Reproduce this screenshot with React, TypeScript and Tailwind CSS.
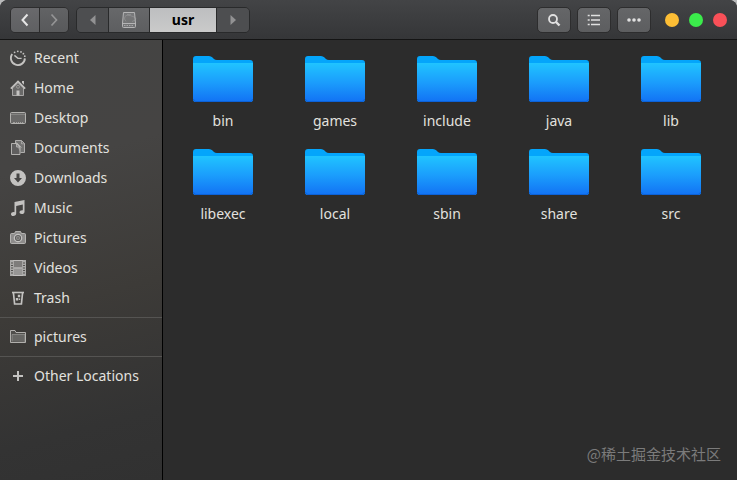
import type { ReactNode } from "react";

function Glyph({ children }: { children: ReactNode }) {
  return (
    <svg
      viewBox="0 0 16 16"
      className="size-4 shrink-0"
      fill="none"
      stroke="currentColor"
      strokeWidth="1"
      aria-hidden="true"
    >
      {children}
    </svg>
  );
}

const icons: Record<string, ReactNode> = {
  Recent: (
    <Glyph>
      <path d="M2.2 4A7 7 0 1 0 14.9 8.4" strokeWidth="1.9" />
      <path d="M4.4 5.4 8 8.400h3.600" strokeWidth="1.400" />
      <g fill="currentColor" stroke="none">
        <circle cx="4.600" cy="2.300" r=".9" />
        <circle cx="7.800" cy="1.300" r=".9" />
        <circle cx="11" cy="1.900" r=".9" />
        <circle cx="13.400" cy="3.700" r=".9" />
        <circle cx="14.800" cy="6.200" r=".9" />
      </g>
    </Glyph>
  ),
  Home: (
    <Glyph>
      <path d="M2.500 8v7.500h11V8L8 2.600z" fill="#ffffff" fillOpacity=".2" strokeOpacity=".75" />
      <path d="M.8 8.600 8 1.400l7.200 7.200" strokeWidth="1.500" />
      <path d="M12 1h2v3.800l-2-2z" fill="currentColor" stroke="none" />
      <circle cx="8" cy="6.800" r="1.500" strokeOpacity=".5" />
      <path d="M6.500 10.500h3v5h-3z" fill="currentColor" stroke="none" />
    </Glyph>
  ),
  Desktop: (
    <Glyph>
      <rect x=".5" y="2.500" width="15" height="11" rx="1" fill="#ffffff" fillOpacity=".2" strokeOpacity=".85" />
      <path d="M1 4.500h14" strokeOpacity=".3" />
      <path d="M3 12.500h2M6 12.500h1M8 12.500h1M10 12.500h1M12 12.500h1" strokeOpacity=".6" />
    </Glyph>
  ),
  Documents: (
    <Glyph>
      <path d="M5.500 3.500v-3h6l3 3v9h-4" fill="#ffffff" fillOpacity=".25" strokeOpacity=".8" />
      <path d="M11.500.8v3h3" strokeOpacity=".6" />
      <path d="M1.500 3.500h5l3.500 3.500v7.500H1.500z" fill="#ffffff" fillOpacity=".15" strokeOpacity=".85" />
      <path d="M6.500 3.500V7H10M6.500 2.500l5 5" strokeOpacity=".7" />
    </Glyph>
  ),
  Downloads: (
    <Glyph>
      <path
        d="M8 0a8 8 0 1 0 0 16A8 8 0 0 0 8 0ZM6.500 3.500h3V8H12l-4 4.500L4 8h2.500z"
        fill="currentColor"
        fillRule="evenodd"
        stroke="none"
      />
    </Glyph>
  ),
  Music: (
    <Glyph>
      <path
        d="M4.500 2 14.500 0v11.700c0 1.400-1.200 2.300-2.800 2.300-1.400 0-2.200-.7-2.200-1.700 0-1.300 1.500-2.300 3.300-2V4.600l-6.600 1.300v7.600c0 1.500-1.300 2.500-2.900 2.500C1.900 16 1 15.300 1 14.200c0-1.400 1.600-2.400 3.500-2z"
        fill="currentColor"
        stroke="none"
      />
    </Glyph>
  ),
  Pictures: (
    <Glyph>
      <path
        d="M1.500 3.500h3l1-2h5l1 2h3q1 0 1 1v8q0 1-1 1h-13q-1 0-1-1v-8q0-1 1-1Z"
        fill="#ffffff"
        fillOpacity=".4"
        strokeOpacity=".85"
      />
      <circle cx="8" cy="8" r="3.700" fill="#5a5958" strokeWidth="1.200" />
      <circle cx="8" cy="8" r="1.800" fill="#767573" strokeOpacity=".4" />
    </Glyph>
  ),
  Videos: (
    <Glyph>
      <rect x=".5" y=".5" width="15" height="15" fill="#ffffff" fillOpacity=".1" strokeOpacity=".8" />
      <rect x="3.500" y=".5" width="9" height="7" fill="#ffffff" fillOpacity=".25" strokeOpacity=".7" />
      <rect x="3.500" y="8.500" width="9" height="7" fill="#ffffff" fillOpacity=".4" strokeOpacity=".7" />
      <path d="M2 1v14M14 1v14" strokeWidth="2" strokeDasharray="1.500 1" strokeOpacity=".8" />
    </Glyph>
  ),
  Trash: (
    <Glyph>
      <path d="M2 2.500h12" strokeWidth="1.600" />
      <path d="M3.400 2.500 4.600 14h6.800l1.200-11.500" strokeWidth="1.700" />
      <path d="M7.800 4.800h2.400v2.400H7.800zM5.800 8h2.400v2.600H5.800zM8.800 8.500h1.400v1.400H8.800z" fill="currentColor" stroke="none" />
    </Glyph>
  ),
  pictures: (
    <Glyph>
      <path d="M.5 13.500v-12h4.500l1 2h9.500v10z" fill="#ffffff" fillOpacity=".1" strokeOpacity=".85" />
      <path d="M2 12.500v-7h13v7.500" fill="#ffffff" fillOpacity=".14" strokeOpacity=".4" />
    </Glyph>
  ),
  "Other Locations": (
    <Glyph>
      <path d="M8 3v10M3 8h10" strokeWidth="2" />
    </Glyph>
  ),
};

const placeGroups = [
  ["Recent", "Home", "Desktop", "Documents", "Downloads", "Music", "Pictures", "Videos", "Trash"],
  ["pictures"],
  ["Other Locations"],
];

const folders = [
  "bin", "games", "include", "java", "lib",
  "libexec", "local", "sbin", "share", "src",
];

function Places() {
  return (
    <nav
      aria-label="Places"
      className="w-[163px] shrink-0 border-r border-black bg-[linear-gradient(165deg,#444443_0%,#454443_28%,#3d3b38_58%,#333333_85%,#313131_100%)] text-[#e2e1df]"
    >
      {placeGroups.map((group, i) => (
        <ul
          key={group[0]}
          className={i === 0 ? "pt-[3px] pb-1" : "border-t border-[#555452] py-1"}
        >
          {group.map((name) => (
            <li key={name}>
              <a href="#" className="flex h-[30px] items-center gap-2 px-2.5 whitespace-nowrap">
                <span className="text-[#c3c2c0]">{icons[name]}</span>
                {name}
              </a>
            </li>
          ))}
        </ul>
      ))}
    </nav>
  );
}

function FolderIcon() {
  return (
    <svg viewBox="0 0 60 46" className="h-[46px] w-[60px]" aria-hidden="true">
      <path
        d="M0 3Q0 0 3 0H16Q18 0 19.500 1.500L21 3Q22 4 24 4H57Q60 4 60 7V43Q60 46 57 46H3Q0 46 0 43Z"
        fill="#04a5fb"
      />
      <path d="M0 7H60V43Q60 46 57 46H3Q0 46 0 43Z" fill="url(#folder-front)" />
      <path d="M.5 43Q.5 45.500 3 45.500H57Q59.500 45.500 59.500 43" fill="none" stroke="#0c62d8" />
    </svg>
  );
}

const tool =
  "flex h-[26px] w-[34px] items-center justify-center rounded-[5px] border border-[#2d2d2e] bg-linear-to-b from-[#656668] to-[#5d5e60] text-[#e0e0e0]";

function Header() {
  return (
    <header className="flex h-10 shrink-0 items-center border-b border-[#141414] bg-linear-to-b from-[#434446] to-[#353638] px-2.5">
      <div className="flex overflow-hidden rounded-[5px] border border-[#2d2d2e]">
        <button aria-label="Back" className="flex h-6 w-7 items-center justify-center bg-linear-to-b from-[#69696c] to-[#5f6062] text-[#e6e6e6]">
          <svg viewBox="0 0 16 16" className="size-4" fill="none" stroke="currentColor" strokeWidth="2">
            <path d="M10.500 2.500 5.500 8l5 5.500" />
          </svg>
        </button>
        <button aria-label="Forward" className="flex h-6 w-[29px] items-center justify-center border-l border-[#2d2d2e] bg-linear-to-b from-[#626365] to-[#58595b] text-[#949495]">
          <svg viewBox="0 0 16 16" className="size-4" fill="none" stroke="currentColor" strokeWidth="1.700">
            <path d="M5.500 2.500 10.500 8l-5 5.500" />
          </svg>
        </button>
      </div>
      <div className="ml-[7px] flex overflow-hidden rounded-[5px] border border-[#292a2b]">
        <button aria-label="Scroll path left" className="flex h-6 w-[31px] items-center justify-center bg-[#4d4e50] text-[#929293]">
          <svg viewBox="0 0 16 16" className="size-4" fill="currentColor">
            <path d="M10.500 3v10L5 8z" />
          </svg>
        </button>
        <button aria-label="Computer" className="flex h-6 w-[41px] items-center justify-center border-l border-[#292a2b] bg-linear-to-b from-[#67686a] to-[#5d5e60] text-[#b4b4b5]">
          <svg viewBox="0 0 16 16" className="size-4" fill="none" stroke="currentColor">
            <path d="M2.500.5h11l1 10.500v3.500q0 1-1 1h-11q-1 0-1-1V11z" fill="#ffffff" fillOpacity=".12" />
            <path d="M2 11.500h12" />
            <path d="M5 9.500Q2.500 7 4 4.500T12 4.500T11 9.500M6 2.500h4" strokeOpacity=".35" />
            <path d="M3 13.500h10" strokeDasharray="1.500 1" strokeOpacity=".8" />
          </svg>
        </button>
        <button className="h-6 w-[67px] border-l border-[#292a2b] bg-linear-to-b from-[#bdbec0] to-[#cacaca] text-sm font-bold text-black">
          usr
        </button>
        <button aria-label="Scroll path right" className="flex h-6 w-[33px] items-center justify-center border-l border-[#292a2b] bg-[#4d4e50] text-[#929293]">
          <svg viewBox="0 0 16 16" className="size-4" fill="currentColor">
            <path d="M5.500 3v10L11 8z" />
          </svg>
        </button>
      </div>
      <div className="ml-auto flex gap-1.5">
        <button aria-label="Search" className={tool}>
          <svg viewBox="0 0 16 16" className="size-4" fill="none" stroke="currentColor" strokeWidth="1.800">
            <circle cx="7" cy="7" r="4" />
            <path d="m10 10 3.500 3.500" strokeWidth="2.400" />
          </svg>
        </button>
        <button aria-label="List view" className={tool}>
          <svg viewBox="0 0 16 16" className="size-4" fill="none" stroke="currentColor" strokeWidth="1.700">
            <path d="M1.700 3.500h2M1.700 8h2M1.700 12.500h2M5 3.500h9M5 8h9M5 12.500h9" />
          </svg>
        </button>
        <button aria-label="Menu" className={tool}>
          <svg viewBox="0 0 16 16" className="size-4" fill="currentColor">
            <circle cx="3" cy="8" r="1.800" />
            <circle cx="8" cy="8" r="1.800" />
            <circle cx="13" cy="8" r="1.800" />
          </svg>
        </button>
      </div>
      <div className="ml-3.5 flex gap-2.5">
        <button aria-label="Minimize" className="size-3.5 rounded-full bg-[#fdbe35]" />
        <button aria-label="Maximize" className="size-3.5 rounded-full bg-[#3beb4b]" />
        <button aria-label="Close" className="size-3.5 rounded-full bg-[#f95058]" />
      </div>
    </header>
  );
}

export default function App() {
  return (
    <div className="min-h-screen bg-[#b9babb] font-['Noto_Sans','Noto_Sans_CJK_SC',sans-serif] text-sm">
      <svg className="absolute size-0" aria-hidden="true">
        <linearGradient id="folder-front" x1="0" y1="0" x2="0" y2="1">
          <stop offset="0" stopColor="#20c4ff" />
          <stop offset=".5" stopColor="#1b9dfc" />
          <stop offset="1" stopColor="#1272f4" />
        </linearGradient>
      </svg>
      <div className="flex min-h-screen flex-col overflow-hidden rounded-t-lg bg-[#2c2c2c]">
        <Header />
        <div className="flex grow">
          <Places />
          <main className="flex grow flex-col justify-between">
            <ul className="grid grid-cols-[repeat(auto-fill,112px)] pt-4 pl-1">
              {folders.map((name) => (
                <li key={name} className="h-[93px]">
                  <a href="#" className="flex flex-col items-center gap-[9px] text-[#e2e1df]">
                    <FolderIcon />
                    <span className="leading-5">{name}</span>
                  </a>
                </li>
              ))}
            </ul>
            <p className="pr-4 pb-3.5 text-right font-['Noto_Sans_CJK_SC',sans-serif] text-[15px] leading-6 text-[#7b7b7b]">
              @稀土掘金技术社区
            </p>
          </main>
        </div>
      </div>
    </div>
  );
}
